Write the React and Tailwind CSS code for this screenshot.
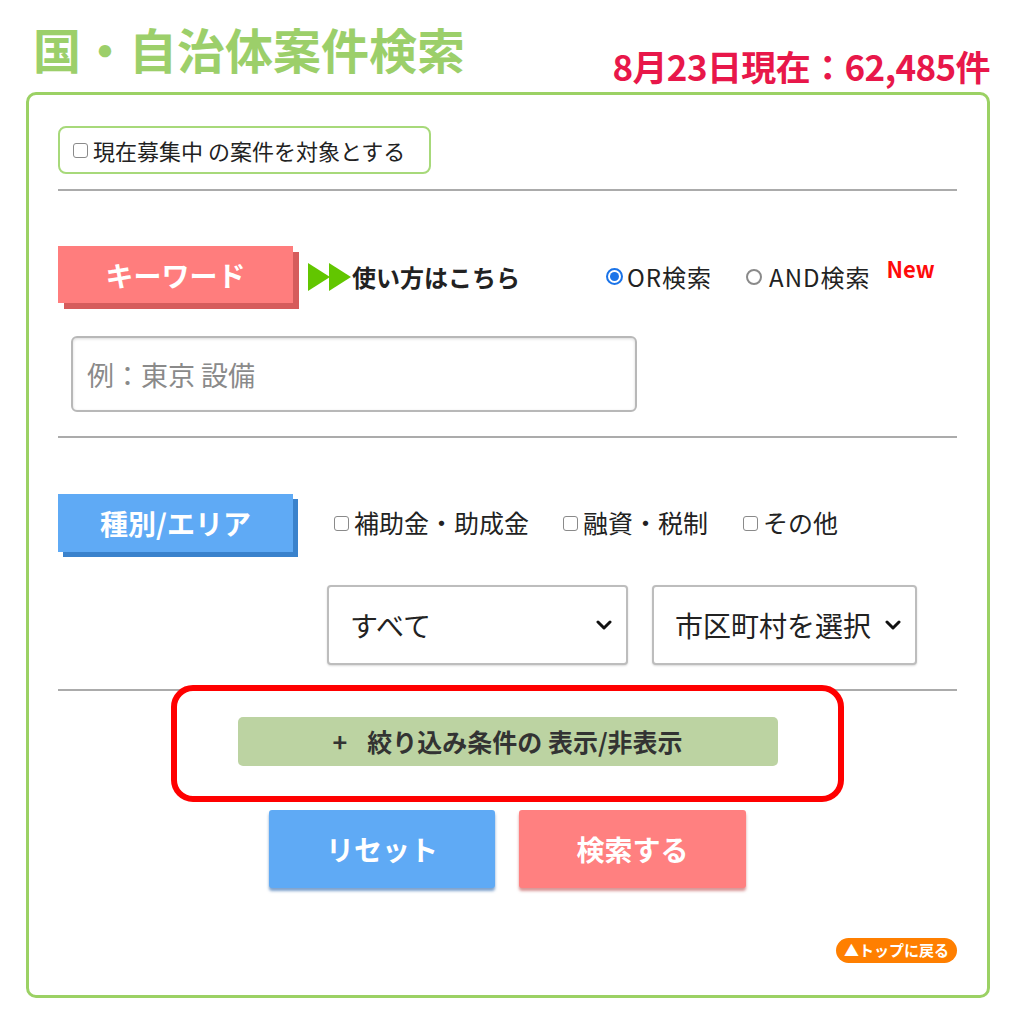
import React from "react";

// colour palette picked from the reference
const c = {
  green: "#9bd164",
};

function Box() {
  return <span className="inline-block w-[15px] h-[15px] min-w-[15px] border border-[#8a8a8a] rounded-[3px] bg-white mr-[5px]" />;
}

function Radio({ on }) {
  return on ? (
    <span className="inline-flex items-center justify-center w-[17px] h-[17px] rounded-full border-2 border-[#1a73e8] bg-white mr-[4px]">
      <span className="w-[9px] h-[9px] rounded-full bg-[#1a73e8]" />
    </span>
  ) : (
    <span className="inline-block w-[16px] h-[16px] rounded-full border-2 border-[#8a8a8a] bg-white mr-[7px]" />
  );
}

function Chevron() {
  return (
    <svg width="16" height="10" viewBox="0 0 16 10" className="shrink-0">
      <path d="M2 2 L8 8 L14 2" fill="none" stroke="#111" strokeWidth="3" strokeLinecap="round" strokeLinejoin="round" />
    </svg>
  );
}

function Select({ width, label }) {
  return (
    <div className={`${width} h-[80px] flex items-center justify-between pl-[21px] pr-[14px] border-2 border-[#bdbdbd] rounded-[4px] bg-white shadow-[0_1px_2px_rgba(0,0,0,0.15)]`}>
      <span className="text-[28px] text-[#222]">{label}</span>
      <Chevron />
    </div>
  );
}

export default function App() {
  return (
    <div className="w-[1014px] h-[1024px] bg-white pl-[26px] pr-[24px] pt-[24px] font-['Noto_Sans_CJK_JP','Noto_Sans',sans-serif] text-[#222]">
      {/* Header */}
      <div className="flex items-start justify-between h-[68px]">
        <h1 className="pl-[7px] text-[48px] leading-[48px] font-bold text-[#9ccf6a]">国・自治体案件検索</h1>
        <div className="mt-[24px] text-[35px] leading-[36px] font-bold text-[#e8174a] tracking-[-0.6px]">
          8月23日現在：62,485件
        </div>
      </div>

      {/* Search card */}
      <div className="border-[3px] rounded-[10px] pt-[31px] pb-[32px] pl-[29px] pr-[30px]" style={{ borderColor: c.green }}>
        <div className="w-[373px] h-[48px] flex items-center pl-[13px] border-2 border-[#a7d97a] rounded-[8px] text-[22px]">
          <Box />
          <span>現在募集中 の案件を対象とする</span>
        </div>

        <div className="mt-[15px] h-[2px] bg-[#ababab]" />

        {/* Keyword */}
        <div className="mt-[55px] flex items-center h-[57px]">
          <div className="w-[235px] h-[57px] flex items-center justify-center bg-[#ff7d7d] shadow-[6px_6px_0_#d65c5c] text-white text-[28px] font-bold">
            キーワード
          </div>
          <svg width="44" height="28" viewBox="0 0 44 28" className="ml-[15px] mt-[4px]">
            <polygon points="0,0 22,14 0,28" fill="#62c600" />
            <polygon points="21,0 43,14 21,28" fill="#62c600" />
          </svg>
          <span className="text-[24px] font-bold text-[#222] mt-[4px]">使い方はこちら</span>
          <div className="ml-[86px] mt-[4px] flex items-center text-[24px] tracking-[1px]">
            <Radio on />
            <span>OR検索</span>
            <span className="ml-[34px] flex items-center">
              <Radio />
              <span>AND検索</span>
            </span>
            <span className="ml-[16px] -mt-[17px] text-[22px] font-bold text-[#ff0a0a] tracking-normal">New</span>
          </div>
        </div>

        <input
          type="text"
          placeholder="例：東京 設備"
          className="mt-[33px] ml-[13px] block w-[566px] h-[76px] px-[14px] text-[27px] border-2 border-[#b8b8b8] rounded-[6px] shadow-[inset_0_1px_3px_rgba(0,0,0,0.15)] placeholder:text-[#8a8a8a] outline-none"
        />

        <div className="mt-[24px] h-[2px] bg-[#ababab]" />

        {/* Area */}
        <div className="mt-[56px] flex items-center h-[58px]">
          <div className="w-[235px] h-[58px] flex items-center justify-center bg-[#5faaf5] shadow-[5px_5px_0_#3a82cc] text-white text-[28px] font-bold">
            種別/エリア
          </div>
          <div className="ml-[41px] flex items-center text-[25px]">
            <Box />
            <span>補助金・助成金</span>
            <span className="ml-[34px] flex"><Box /></span>
            <span>融資・税制</span>
            <span className="ml-[35px] flex"><Box /></span>
            <span>その他</span>
          </div>
        </div>

        <div className="mt-[33px] pl-[269px] flex gap-[24px]">
          <Select width="w-[301px]" label="すべて" />
          <Select width="w-[265px]" label="市区町村を選択" />
        </div>

        <div className="mt-[24px] h-[2px] bg-[#ababab]" />

        {/* Toggle conditions */}
        <div className="mt-[26px] flex justify-center">
          <div className="relative">
            <button className="w-[540px] h-[49px] flex items-center justify-center bg-[#bcd3a2] rounded-[5px] text-[25px] font-bold text-[#333]">
              <span className="mr-[20px]">+</span>
              <span>絞り込み条件の 表示/非表示</span>
            </button>
            <div className="absolute -top-[32px] -left-[67px] -right-[66px] -bottom-[36px] border-[6px] border-[#ff0000] rounded-[22px] pointer-events-none" />
          </div>
        </div>

        {/* Actions */}
        <div className="mt-[44px] flex justify-center gap-[24px]">
          <button className="w-[226px] h-[78px] bg-[#5faaf5] rounded-[3px] shadow-[0_3px_3px_rgba(40,100,170,0.6)] text-white text-[28px] font-bold">
            リセット
          </button>
          <button className="w-[227px] h-[78px] bg-[#ff8080] rounded-[3px] shadow-[0_3px_3px_rgba(190,80,80,0.6)] text-white text-[28px] font-bold">
            検索する
          </button>
        </div>

        <div className="mt-[50px] flex justify-end">
          <span className="h-[25px] px-[8px] flex items-center rounded-full bg-[#ff7f00] text-white text-[15px] font-bold">
            ▲トップに戻る
          </span>
        </div>
      </div>
    </div>
  );
}
